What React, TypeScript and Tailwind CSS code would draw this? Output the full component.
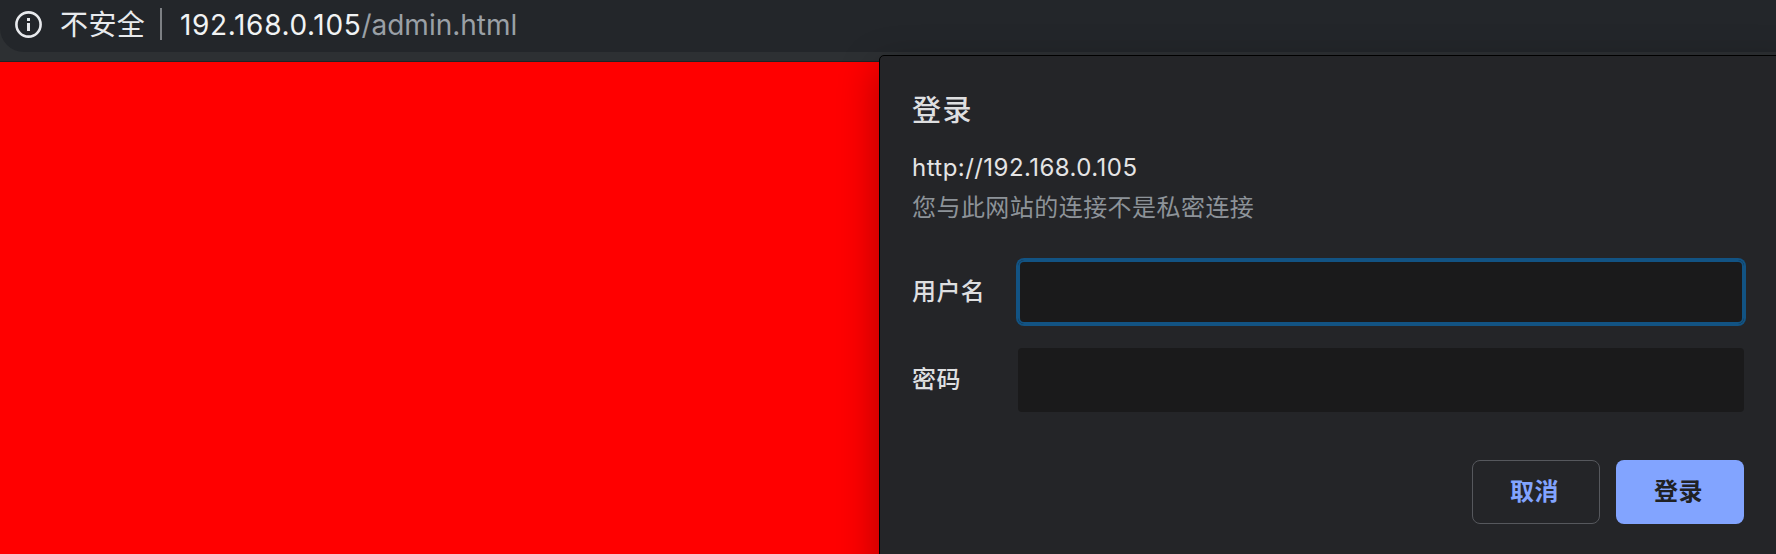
const FONT = "font-['Inter','Noto_Sans_CJK_SC',sans-serif]";

function InfoIcon() {
  return (
    <svg className="h-7 w-7 shrink-0" viewBox="0 0 28 28" fill="none">
      <circle cx="14.5" cy="14.5" r="12.1" stroke="#e8eaed" strokeWidth="2.6" />
      <rect x="13" y="8" width="3" height="3" fill="#e8eaed" />
      <rect x="13" y="13" width="3" height="8" fill="#e8eaed" />
    </svg>
  );
}

function AddressBar() {
  return (
    <header className="h-[62px] w-full border-b border-[#202326] bg-[#2d3033]">
      <div className="flex h-[52px] items-center rounded-bl-[24px] bg-[#23262a] pb-1 pl-[14px] whitespace-nowrap">
        <InfoIcon />
        <span className="ml-[18px] w-[86px] pt-px text-[28px] leading-8 tracking-[0.4px] text-[#e8eaed]">不安全</span>
        <span className="ml-[14px] h-8 w-0.5 bg-[#7d8084]" />
        <span className="ml-[18px] pt-px text-[28px] leading-8">
          <span className="tracking-[0.65px] text-[#f1f3f4]">192.168.0.105</span>
          <span className="text-[#9aa0a6]">/admin.html</span>
        </span>
      </div>
    </header>
  );
}

function LoginDialog() {
  return (
    <section className="absolute top-[55px] left-[879px] h-[520px] w-[920px] rounded-tl-[5px] border border-black bg-[#242528] pl-8 whitespace-nowrap shadow-[0_12px_40px_rgba(0,0,0,0.32)]">
      <h1 className="mt-[35px] h-10 text-[29px] leading-10 font-medium tracking-[1.5px] text-[#dedfe0]">登录</h1>
      <p className="mt-[21px] h-8 text-2xl leading-8 tracking-[0.45px] text-[#e4e4e5]">http://192.168.0.105</p>
      <p className="mt-2 h-8 text-2xl leading-8 tracking-[0.45px] text-[#8d9399]">您与此网站的连接不是私密连接</p>
      <form className="mt-9 w-[832px]">
        <label className="flex h-16 items-center">
          <span className="w-[106px] text-2xl font-medium tracking-[0.4px] text-[#dedfe0]">用户名</span>
          <input className="h-16 w-[726px] rounded-md bg-[#1a1a1b] ring-2 ring-[#125383] outline-2 -outline-offset-2 outline-[#125383]" />
        </label>
        <label className="mt-6 flex h-16 items-center">
          <span className="w-[106px] text-2xl font-medium tracking-[0.4px] text-[#dedfe0]">密码</span>
          <input type="password" className="h-16 w-[726px] rounded bg-[#1a1a1b]" />
        </label>
        <div className="mt-12 flex justify-end gap-4">
          <button type="button" className="h-16 w-32 rounded-lg border border-[#56585d] pr-[3px] text-2xl font-bold tracking-[0.4px] text-[#82a4ff]">取消</button>
          <button type="button" className="h-16 w-32 rounded-lg bg-[#82a4ff] pr-[3px] text-2xl font-bold tracking-[0.4px] text-[#202124]">登录</button>
        </div>
      </form>
    </section>
  );
}

export default function App() {
  return (
    <div className={`relative h-[554px] w-[1776px] overflow-hidden bg-[#ff0000] ${FONT}`}>
      <AddressBar />
      <LoginDialog />
    </div>
  );
}
